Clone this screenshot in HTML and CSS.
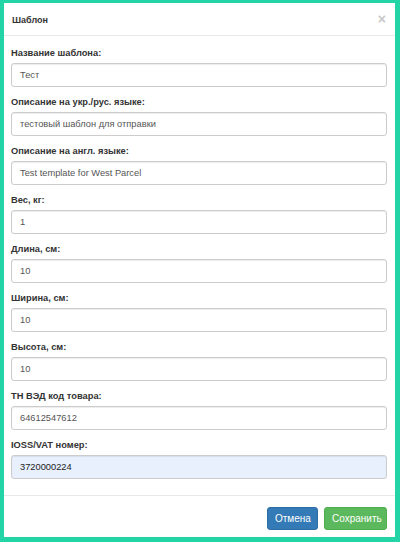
FILE: index.html
```html
<!DOCTYPE html>
<html lang="ru">
<head>
<meta charset="utf-8">
<link rel="stylesheet" href="styles.css">
</head>
<body>
<div class="frame">
  <div class="modal-header">
    <span class="title">Шаблон</span>
    <span class="close">×</span>
  </div>
  <div class="modal-body">
    <div class="field"><label>Название шаблона:</label><div class="input">Тест</div></div>
    <div class="field"><label>Описание на укр./рус. языке:</label><div class="input">тестовый шаблон для отправки</div></div>
    <div class="field"><label>Описание на англ. языке:</label><div class="input">Test template for West Parcel</div></div>
    <div class="field"><label>Вес, кг:</label><div class="input">1</div></div>
    <div class="field"><label>Длина, см:</label><div class="input">10</div></div>
    <div class="field"><label>Ширина, см:</label><div class="input">10</div></div>
    <div class="field"><label>Высота, см:</label><div class="input">10</div></div>
    <div class="field"><label>ТН ВЭД код товара:</label><div class="input">64612547612</div></div>
    <div class="field"><label>IOSS/VAT номер:</label><div class="input autofill">3720000224</div></div>
  </div>
  <div class="modal-footer">
    <button class="btn btn-primary">Отмена</button>
    <button class="btn btn-success">Сохранить</button>
  </div>
</div>
</body>
</html>
```

FILE: styles.css
```css
* { box-sizing: border-box; }
html, body { margin: 0; padding: 0; }
body {
  font-family: "Liberation Sans", Arial, sans-serif;
  font-size: 9px;
  color: #333;
  background: #fff;
}
.frame {
  width: 400px;
  height: 542px;
  border-style: solid;
  border-color: #23d5a6;
  border-width: 3px 5px 5px 4px;
  display: flex;
  flex-direction: column;
  background: #fff;
}
.modal-header {
  height: 33px;
  border-bottom: 1px solid #e9e9e9;
  display: flex;
  align-items: center;
  justify-content: space-between;
  padding: 0 9px 0 8px;
}
.title {
  font-weight: bold;
  font-size: 9px;
  color: #333;
  margin-top: 1px;
}
.close {
  font-size: 14px;
  color: #c8c8c8;
  font-weight: bold;
  line-height: 1;
}
.modal-body {
  flex: 1;
  padding: 10px 8px 0 7px;
  display: flex;
  flex-direction: column;
  gap: 8px;
  border-bottom: 1px solid #e9e9e9;
}
.field {
  display: flex;
  flex-direction: column;
  gap: 3px;
}
label {
  font-weight: bold;
  font-size: 9.3px;
  line-height: 14px;
  color: #333;
}
.input {
  height: 24px;
  border: 1px solid #ccc;
  border-radius: 3px;
  box-shadow: inset 0 1px 1px rgba(0,0,0,0.075);
  padding: 0 8px;
  display: flex;
  align-items: center;
  font-size: 9.3px;
  color: #555;
}
.input.autofill {
  background: #e8f0fe;
  color: #222;
}
.modal-footer {
  height: 41px;
  display: flex;
  justify-content: flex-end;
  align-items: flex-start;
  gap: 6px;
  padding: 11px 8px 0 0;
}
.btn {
  height: 23px;
  border-radius: 3px;
  border: 1px solid transparent;
  font-family: "Liberation Sans", Arial, sans-serif;
  font-size: 10px;
  color: #fff;
  padding: 0 7px;
}
.btn-primary { background: #337ab7; border-color: #2e6da4; width: 51px; }
.btn-success { background: #5cb85c; border-color: #4cae4c; width: 63px; }
```
